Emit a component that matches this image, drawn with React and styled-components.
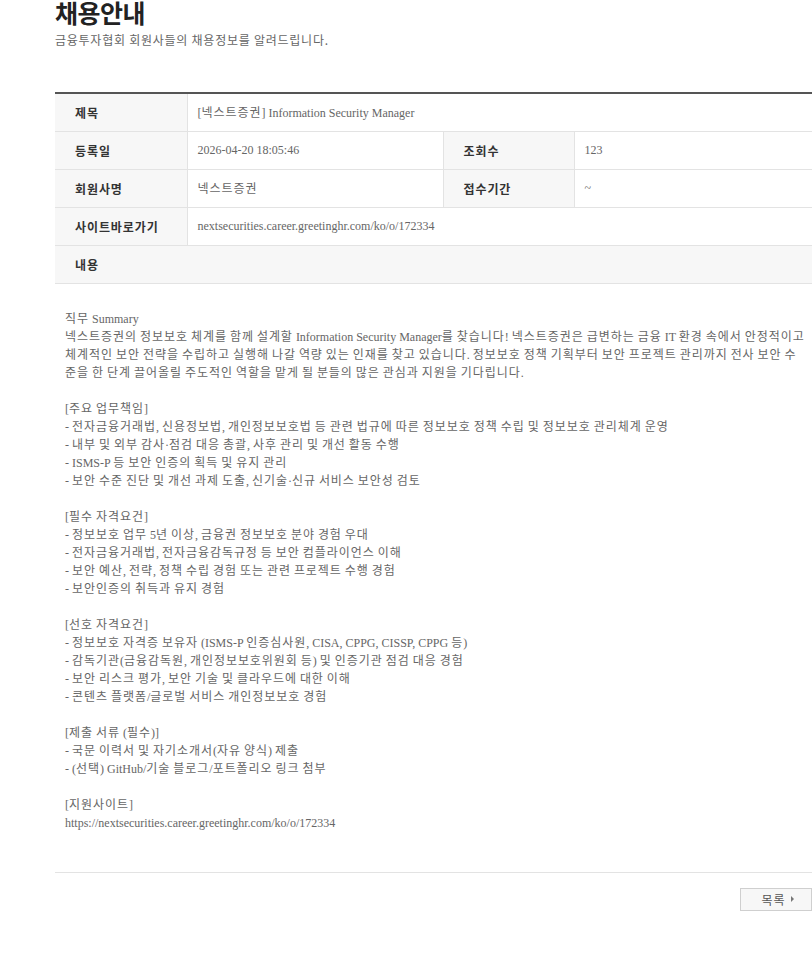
import styled, { createGlobalStyle } from "styled-components";

const GlobalStyle = createGlobalStyle`
    html, body {
        margin: 0;
        padding: 0;
        background: #fff;
        overflow-x: hidden;
    }
    body {
        font-family: "Noto Sans CJK KR", "Noto Sans", sans-serif;
    }
`;

const post = {
    title: "[넥스트증권] Information Security Manager",
    date: "2026-04-20 18:05:46",
    views: "123",
    company: "넥스트증권",
    period: "~",
    site: "nextsecurities.career.greetinghr.com/ko/o/172334",
};

const body = `직무 Summary
넥스트증권의 정보보호 체계를 함께 설계할 Information Security Manager를 찾습니다! 넥스트증권은 급변하는 금융 IT 환경 속에서 안정적이고 체계적인 보안 전략을 수립하고 실행해 나갈 역량 있는 인재를 찾고 있습니다. 정보보호 정책 기획부터 보안 프로젝트 관리까지 전사 보안 수준을 한 단계 끌어올릴 주도적인 역할을 맡게 될 분들의 많은 관심과 지원을 기다립니다.

[주요 업무책임]
- 전자금융거래법, 신용정보법, 개인정보보호법 등 관련 법규에 따른 정보보호 정책 수립 및 정보보호 관리체계 운영
- 내부 및 외부 감사·점검 대응 총괄, 사후 관리 및 개선 활동 수행
- ISMS-P 등 보안 인증의 획득 및 유지 관리
- 보안 수준 진단 및 개선 과제 도출, 신기술·신규 서비스 보안성 검토

[필수 자격요건]
- 정보보호 업무 5년 이상, 금융권 정보보호 분야 경험 우대
- 전자금융거래법, 전자금융감독규정 등 보안 컴플라이언스 이해
- 보안 예산, 전략, 정책 수립 경험 또는 관련 프로젝트 수행 경험
- 보안인증의 취득과 유지 경험

[선호 자격요건]
- 정보보호 자격증 보유자 (ISMS-P 인증심사원, CISA, CPPG, CISSP, CPPG 등)
- 감독기관(금융감독원, 개인정보보호위원회 등) 및 인증기관 점검 대응 경험
- 보안 리스크 평가, 보안 기술 및 클라우드에 대한 이해
- 콘텐츠 플랫폼/글로벌 서비스 개인정보보호 경험

[제출 서류 (필수)]
- 국문 이력서 및 자기소개서(자유 양식) 제출
- (선택) GitHub/기술 블로그/포트폴리오 링크 첨부

[지원사이트]
https://nextsecurities.career.greetinghr.com/ko/o/172334`;

function ko(text) {
    return text.split(/([\u1100-\u11ff\u3130-\u318f\uac00-\ud7af]+)/).map((part, i) =>
        i % 2 === 1 ? <Hangul key={i}>{part}</Hangul> : part
    );
}

export default function App() {
    const lines = body.split("\n");

    return (
        <Page>
            <GlobalStyle />
            <Title>채용안내</Title>
            <Subtitle>금융투자협회 회원사들의 채용정보를 알려드립니다.</Subtitle>

            <DetailTable>
                <colgroup>
                    <col style={{ width: 132 }} />
                    <col style={{ width: 256 }} />
                    <col style={{ width: 131 }} />
                    <col />
                </colgroup>
                <tbody>
                    <tr>
                        <Label>제목</Label>
                        <Value colSpan={3}>{ko(post.title)}</Value>
                    </tr>
                    <tr>
                        <Label>등록일</Label>
                        <Value>{post.date}</Value>
                        <Label>조회수</Label>
                        <Value>{post.views}</Value>
                    </tr>
                    <tr>
                        <Label>회원사명</Label>
                        <Value>{ko(post.company)}</Value>
                        <Label>접수기간</Label>
                        <Value>{post.period}</Value>
                    </tr>
                    <tr>
                        <Label>사이트바로가기</Label>
                        <Value colSpan={3}>{post.site}</Value>
                    </tr>
                    <tr>
                        <Label colSpan={4} $wide>내용</Label>
                    </tr>
                </tbody>
            </DetailTable>

            <Content>
                {lines.map((line, i) => (
                    <Line key={i}>{line ? ko(line) : "\u00a0"}</Line>
                ))}
            </Content>

            <Footer>
                <ListButton type="button">
                    목록
                    <Arrow />
                </ListButton>
            </Footer>
        </Page>
    );
}

const Page = styled.div`
    padding-left: 55px;
    padding-bottom: 40px;
`

const Title = styled.h1`
    margin: 0;
    font-size: 25px;
    line-height: 25px;
    font-weight: 700;
    color: #222;
    letter-spacing: -0.5px;
`

const Subtitle = styled.p`
    margin: 6px 0 0;
    font-size: 12px;
    line-height: 18px;
    color: #666;
    letter-spacing: 0.75px;
`

const DetailTable = styled.table`
    width: 100%;
    margin-top: 43px;
    border-collapse: collapse;
    table-layout: fixed;
    border-top: 2px solid #555;
    tr {
        height: 38px;
        border-bottom: 1px solid #e3e3e3;
    }
`

const Label = styled.th`
    padding: 0 0 0 20px;
    text-align: left;
    font-size: 12px;
    font-weight: 700;
    color: #333;
    letter-spacing: 0.9px;
    background: #f7f7f7;
    border-right: ${p => (p.$wide ? "none" : "1px solid #e3e3e3")};
    border-left: 1px solid #e3e3e3;
    &:first-child {
        border-left: none;
    }
`

const Value = styled.td`
    padding: 0 0 0 10px;
    font-family: "Liberation Serif", "Noto Sans CJK KR", serif;
    font-size: 12px;
    color: #666;
    white-space: nowrap;
    overflow: hidden;
`

const Hangul = styled.span`
    letter-spacing: 0.95px;
`

const Content = styled.div`
    padding: 26px 5px 40px 10px;
    border-bottom: 1px solid #e3e3e3;
    font-family: "Liberation Serif", "Noto Sans CJK KR", serif;
    font-size: 12px;
    line-height: 18px;
    color: #666;
`

const Line = styled.p`
    margin: 0;
    min-height: 18px;
`

const Footer = styled.div`
    display: flex;
    justify-content: flex-end;
    padding-top: 15px;
`

const ListButton = styled.button`
    display: flex;
    align-items: center;
    justify-content: center;
    gap: 6px;
    width: 72px;
    height: 23px;
    padding: 0 0 0 4px;
    border: 1px solid #cfcfcf;
    background: #f7f7f7;
    font-family: "Noto Sans CJK KR", sans-serif;
    font-size: 12px;
    letter-spacing: 0.9px;
    color: #555;
    cursor: pointer;
`

const Arrow = styled.span`
    width: 0;
    height: 0;
    border-top: 3px solid transparent;
    border-bottom: 3px solid transparent;
    border-left: 3px solid #777;
`
